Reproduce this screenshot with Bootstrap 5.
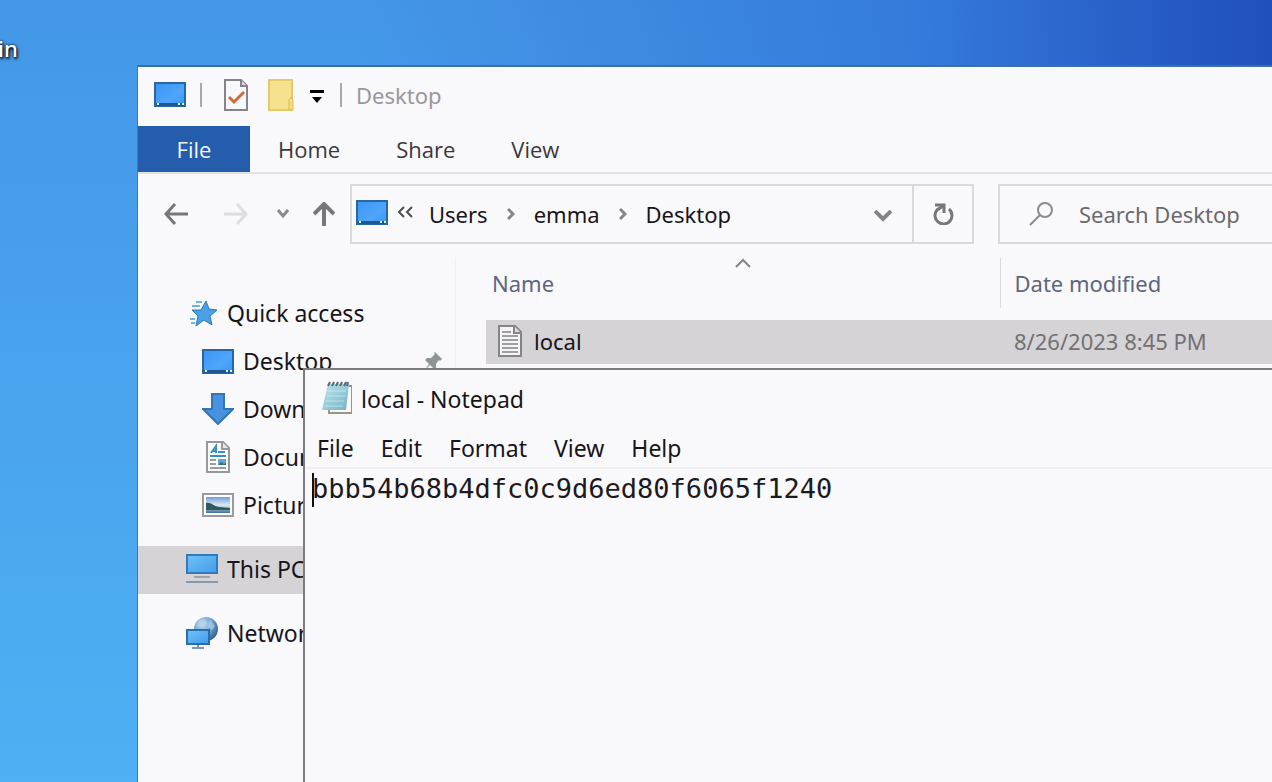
<!DOCTYPE html>
<html lang="en">
<head>
<meta charset="utf-8">
<meta name="viewport" content="width=device-width, initial-scale=1">
<title>Desktop</title>
<link href="https://cdn.jsdelivr.net/npm/bootstrap@5.3.0/dist/css/bootstrap.min.css" rel="stylesheet">
<style>
  body { font: 22px/32px "Noto Sans", "Open Sans", sans-serif; color: #17151a; }
  svg { display: block; flex: none; }
  button { font: inherit; color: inherit; border: 0; background: none; padding: 0; white-space: nowrap; }
  .desktop { background: linear-gradient(90deg, rgba(34,80,188,0) 28%, rgba(50,118,216,.85) 72%, #2457c2 94%, #2050bb), linear-gradient(#4497e8, #4fb0f3); }
  .desk-label { left: -2px; top: 32px; font-weight: 500; color: #fff; text-shadow: 1px 2px 3px #000, 0 0 3px #000; }
  .window { background: #f9f8fb; right: 0; bottom: 0; }
  .explorer { left: 137px; top: 65px; border-left: 1px solid #3b7ab5; border-top: 2px solid #3c719c; }
  .explorer-title { height: 59px; padding: 0 0 4px 16px; color: #99979b; }
  .rule { width: 2px; height: 24px; background: #a9a8ab; }
  .after-rule { margin-left: 22px; }
  .gap-icon { margin-left: 20px; }
  .gap-rule { margin-left: 14px; }
  .ribbon { height: 48px; border-bottom: 2px solid #e2e1e4; color: #39373c; font-family: "Open Sans", "Noto Sans", sans-serif; }
  .ribbon button { padding: 0 28px; }
  .ribbon .file-tab { width: 112px; padding: 0; background: #245dab; color: #f4f6fb; }
  .toolbar { padding: 10px 0 0 26px; }
  .gap-forward { margin-left: 36px; }
  .gap-recent { margin-left: 29px; }
  .gap-up { margin-left: 24px; }
  .field { height: 60px; border: 2px solid #d9d8db; }
  .address { margin-left: 15px; padding-left: 4px; }
  .crumb-arrow { margin: 0 19px; }
  .refresh { width: 60px; border-left: 2px solid #d9d8db; }
  .search { width: 274px; margin-left: 24px; border-right: 0; padding-left: 28px; }
  .search input { border: 0; outline: 0; background: none; padding: 0; margin-left: 25px; min-width: 0; color: #6b696e; }
  .search input::placeholder { color: #6b696e; opacity: 1; }
  .sidebar { width: 318px; margin-top: 14px; padding-top: 32px; border-right: 1px solid #f0eff2; font-size: 23px; }
  .sidebar a { height: 48px; color: inherit; text-decoration: none; padding: 0 12px 2px 48px; gap: 9px; }
  .sidebar a.sub { padding-left: 64px; }
  .sidebar a.chosen { background: #d5d3d5; }
  .sidebar .apart { margin-top: 16px; }
  .files { margin: 14px 0 0 30px; }
  .files table { width: 100%; table-layout: fixed; }
  .files th { height: 50px; font-weight: 400; color: #5c6680; padding: 0 0 0 6px; }
  .files td { height: 44px; padding: 0 0 2px; background: #d5d3d5; }
  .files .when { width: 272px; padding-left: 14px; }
  .files th.when { border-left: 1px solid #dcdbde; }
  .files td.when { color: #727074; }
  .files .spacing td { height: 12px; background: none; }
  .sort { left: 50%; top: 0; transform: translateX(-50%); }
  .notepad { left: 303px; top: 368px; border-left: 2px solid #7b7a7c; border-top: 2px solid #7b7a7c; font-size: 23px; }
  .notepad-title { height: 58px; padding-left: 17px; gap: 9px; }
  .notepad-title svg { margin-bottom: 3px; }
  .notepad-menu { height: 41px; padding: 0 0 0 12px; gap: 27px; border-bottom: 2px solid #efedf0; }
  .paper textarea { font: 27px/34px "DejaVu Sans Mono", monospace; color: #1c1a1e; border: 0; outline: 0; resize: none; background: none; padding: 3px 0 0 7px; }
  .caret { left: 7px; top: 4px; width: 2px; height: 34px; background: #111; }
</style>
</head>
<body>
<svg width="0" height="0" class="position-absolute" aria-hidden="true">
  <defs>
    <linearGradient id="screen" x1="0" y1="0" x2="1" y2="1"><stop offset="0" stop-color="#3995f4"/><stop offset=".6" stop-color="#4fa5fb"/><stop offset="1" stop-color="#3995f4"/></linearGradient>
    <linearGradient id="glass" x1="0" y1="0" x2="1" y2="1"><stop offset="0" stop-color="#6fc2fb"/><stop offset="1" stop-color="#449ce9"/></linearGradient>
    <linearGradient id="pad" x1="0" y1="0" x2="1" y2="1"><stop offset="0" stop-color="#bfe6ee"/><stop offset="1" stop-color="#72b3c4"/></linearGradient>
    <linearGradient id="photo" x1="0" y1="0" x2="0" y2="1"><stop offset="0" stop-color="#6f9dde"/><stop offset=".5" stop-color="#dcebf5"/><stop offset="1" stop-color="#3e7096"/></linearGradient>
    <radialGradient id="globe" cx=".35" cy=".3" r=".8"><stop offset="0" stop-color="#c6e0f2"/><stop offset=".5" stop-color="#6fa5cf"/><stop offset="1" stop-color="#28547f"/></radialGradient>
    <symbol id="desk" viewBox="0 0 32 25"><path d="M1 1h30v23H1z" fill="url(#screen)" stroke="#28679f" stroke-width="2"/><path d="M2 21h28v3H2z" fill="#1e5791"/><path d="M3 21h2v2H3zM24 21h2v2h-2zM28 21h2v2h-2z" fill="#e3f3ff"/></symbol>
  </defs>
</svg>

<main class="desktop position-relative vh-100 overflow-hidden">
  <div class="desk-label position-absolute">in</div>

  <section class="window explorer position-absolute overflow-hidden">
    <header class="explorer-title d-flex align-items-center">
      <svg width="32" height="25"><use href="#desk"/></svg>
      <span class="rule gap-rule"></span>
      <svg width="24" height="32" viewBox="0 0 24 32" class="after-rule"><path d="M1 1h16l6 6v24H1z" fill="#f8f7fa" stroke="#858488" stroke-width="2"/><path d="M17 1v6h6" fill="#dddce0" stroke="#858488" stroke-width="2"/><path d="m5 18 5 5 10-10" fill="none" stroke="#d2693d" stroke-width="3"/></svg>
      <svg width="26" height="32" viewBox="0 0 26 32" class="gap-icon"><path d="M1 1h23v30H1z" fill="#f6e18e" stroke="#e5cb68" stroke-width="2"/><path d="M21 31V21l2-3 2 3v10z" fill="#f3da7b" stroke="#d9bd57"/></svg>
      <button type="button" class="mx-3 pt-1" aria-label="Customize"><svg width="14" height="13" viewBox="0 0 14 13"><path d="M0 0h14v3H0zM2 7h10l-5 6z" fill="#000"/></svg></button>
      <span class="rule"></span>
      <span class="gap-rule">Desktop</span>
    </header>

    <nav class="ribbon d-flex align-items-stretch" aria-label="Ribbon">
      <button type="button" class="file-tab">File</button>
      <button type="button">Home</button>
      <button type="button">Share</button>
      <button type="button">View</button>
    </nav>

    <div class="toolbar d-flex align-items-center">
      <button type="button" aria-label="Back"><svg width="24" height="22" viewBox="0 0 24 22"><path d="M24 11H2M11 1 2 11l9 10" fill="none" stroke="#77767a" stroke-width="3"/></svg></button>
      <button type="button" aria-label="Forward" class="gap-forward"><svg width="24" height="22" viewBox="0 0 24 22"><path d="M0 11h22M13 1l9 10-9 10" fill="none" stroke="#dddce0" stroke-width="3"/></svg></button>
      <button type="button" aria-label="Recent" class="gap-recent"><svg width="12" height="12" viewBox="0 0 12 12"><path d="m1 2 5 6 5-6" fill="none" stroke="#8b8a8e" stroke-width="3"/></svg></button>
      <button type="button" aria-label="Up" class="gap-up"><svg width="22" height="24" viewBox="0 0 22 24"><path d="M11 24V2M1 12 11 2l10 10" fill="none" stroke="#77767a" stroke-width="4"/></svg></button>
      <div class="field address d-flex align-items-center flex-grow-1">
        <svg width="32" height="25" class="mb-1"><use href="#desk"/></svg>
        <svg width="17" height="12" viewBox="0 0 17 12" class="mx-2 mb-1"><path d="M8 1 3 6l5 5M16 1l-5 5 5 5" fill="none" stroke="#4c4b4f" stroke-width="2"/></svg>
        <button type="button" class="ms-2">Users</button>
        <svg width="8" height="12" viewBox="0 0 8 12" class="crumb-arrow"><path d="m1 1 5 5-5 5" fill="none" stroke="#858488" stroke-width="3"/></svg>
        <button type="button">emma</button>
        <svg width="8" height="12" viewBox="0 0 8 12" class="crumb-arrow"><path d="m1 1 5 5-5 5" fill="none" stroke="#858488" stroke-width="3"/></svg>
        <button type="button">Desktop</button>
        <button type="button" class="ms-auto pt-1" aria-label="Previous locations"><svg width="18" height="12" viewBox="0 0 18 12"><path d="m1 1 8 8 8-8" fill="none" stroke="#858488" stroke-width="4"/></svg></button>
        <button type="button" class="refresh gap-icon h-100 d-flex align-items-center justify-content-center" aria-label="Refresh"><svg width="21" height="22" viewBox="0 0 21 22"><path d="M16 6A8.500 8.500 0 1 1 4 7L10 3" fill="none" stroke="#77767a" stroke-width="3"/><path d="M2 2h9v8" fill="none" stroke="#77767a" stroke-width="3"/></svg></button>
      </div>
      <label class="field search d-flex align-items-center flex-shrink-0">
        <svg width="26" height="26" viewBox="0 0 26 26"><circle cx="17" cy="9" r="7" fill="none" stroke="#8b8a8e" stroke-width="2"/><path d="m12 14-10 10" stroke="#8b8a8e" stroke-width="2"/></svg>
        <input type="search" class="w-100" placeholder="Search Desktop" aria-label="Search Desktop">
      </label>
    </div>

    <div class="d-flex">
      <nav class="sidebar flex-shrink-0" aria-label="Folders">
        <a href="#" class="d-flex align-items-center"><svg width="32" height="28" viewBox="0 0 32 28"><path d="m20 2 3 8 8 1-7 6 2 9-8-5-8 6 2-10-6-6h9z" fill="#4a9fe8" stroke="#2e7ab5"/><path d="M10 3h6M6 7h8M4 20h5M5 24h4" stroke="#6eb5e2" stroke-width="2"/></svg>Quick access</a>
        <a href="#" class="sub d-flex align-items-center"><svg width="32" height="25"><use href="#desk"/></svg>Desktop
          <svg width="20" height="20" viewBox="0 0 20 20" class="ms-auto"><path d="m12 1 7 7-2 2-1-1-3 4v4l-2 1-4-4-6 6 5-7-4-4 2-2h4l4-4-1-1z" fill="#8f9496"/></svg></a>
        <a href="#" class="sub d-flex align-items-center"><svg width="32" height="32" viewBox="0 0 32 32"><path d="M10 1h12v15h9L16 31 1 16h9z" fill="#4792e0" stroke="#3573b2" stroke-width="2"/></svg>Downloads</a>
        <a href="#" class="sub d-flex align-items-center"><svg width="32" height="32" viewBox="0 0 32 32"><path d="M5 1h16l6 6v24H5z" fill="#fcfcfd" stroke="#98979a" stroke-width="2"/><path d="M20 1v7h7" fill="#e8e7ea" stroke="#98979a" stroke-width="2"/><path d="m9 12 5-7v7M11 10h4M16 11h7M8 15h16" fill="none" stroke="#3690c8" stroke-width="2"/><path d="M8 19h6M8 23h6M8 27h16" stroke="#9b9a9d" stroke-width="2"/><path d="M16 18h8v6h-8z" fill="#65a4d6"/><path d="m16 24 3-3 3 2 2-1v2z" fill="#397856"/></svg>Documents</a>
        <a href="#" class="sub d-flex align-items-center"><svg width="32" height="24" viewBox="0 0 32 24"><path d="M1 1h30v22H1z" fill="#fff" stroke="#9a999c" stroke-width="2"/><path d="M4 4h24v16H4z" fill="url(#photo)"/><path d="M4 10c5-1 7 3 13 4l11 1v2H4z" fill="#2f5a5c"/></svg>Pictures</a>
        <a href="#" class="chosen apart d-flex align-items-center"><svg width="32" height="30" viewBox="0 0 32 30"><path d="M1 1h30v18H1z" fill="url(#glass)" stroke="#307cb9" stroke-width="2"/><path d="M8 23h16" stroke="#98a4af" stroke-width="2"/><path d="M0 28h32" stroke="#8699ad" stroke-width="2"/></svg>This PC</a>
        <a href="#" class="apart d-flex align-items-center"><svg width="32" height="32" viewBox="0 0 32 32"><circle cx="20" cy="12" r="12" fill="url(#globe)"/><path d="m13 3 6-1 2 4-5 4-5-1zM24 3l5 6-3 4-4-4z" fill="#b5d3e8" opacity=".6"/><path d="M1 13h22v14H1z" fill="url(#glass)" stroke="#246fac" stroke-width="2"/><path d="M12 28v2M6 31h12" stroke="#7d99b0" stroke-width="2"/></svg>Network</a>
      </nav>

      <div class="files flex-grow-1">
        <table>
          <thead><tr>
            <th class="position-relative" scope="col">Name
              <svg class="sort position-absolute" width="16" height="10" viewBox="0 0 16 10"><path d="m1 9 7-7 7 7" fill="none" stroke="#858488" stroke-width="2"/></svg></th>
            <th class="when" scope="col">Date modified</th>
          </tr></thead>
          <tbody>
            <tr class="spacing"><td colspan="2"></td></tr>
            <tr>
              <td><div class="d-flex align-items-center ps-2"><svg width="32" height="32" viewBox="0 0 32 32" class="me-2"><path d="M5 1h16l6 6v24H5z" fill="#f4f3f5" stroke="#858488" stroke-width="2"/><path d="M20 1v7h7" fill="#dedde0" stroke="#858488" stroke-width="2"/><path d="M8 7h9M8 11h16M8 15h16M8 19h16M8 23h16M8 27h16" stroke="#a09fa2" stroke-width="2"/></svg>local</div></td>
              <td class="when">8/26/2023 8:45 PM</td>
            </tr>
          </tbody>
        </table>
      </div>
    </div>
  </section>

  <section class="window notepad position-absolute d-flex flex-column">
    <header class="notepad-title d-flex align-items-center flex-shrink-0">
      <svg width="30" height="33" viewBox="0 0 30 33"><path d="M8 5h22v27H7z" fill="#faf9f5" stroke="#9b9585" stroke-width="2"/><path d="M6 3h21l-3 26H0z" fill="url(#pad)"/><path d="M6 10h18M5 15h18M4 20h18M3 25h18" stroke="#d5edf2" opacity=".7"/><path d="m6 5 2-4m2 4 2-4m2 4 2-4m2 4 2-4m2 4 2-4m1 4 1-4" stroke="#5b6870" stroke-width="2"/></svg>
      <span>local - Notepad</span>
    </header>
    <nav class="notepad-menu d-flex align-items-center flex-shrink-0" aria-label="Menu">
      <button type="button">File</button>
      <button type="button">Edit</button>
      <button type="button">Format</button>
      <button type="button">View</button>
      <button type="button">Help</button>
    </nav>
    <div class="paper position-relative flex-grow-1">
      <textarea class="w-100 h-100 d-block" aria-label="Document text" spellcheck="false">bbb54b68b4dfc0c9d6ed80f6065f1240</textarea>
      <span class="caret position-absolute"></span>
    </div>
  </section>
</main>
<script src="https://cdn.jsdelivr.net/npm/bootstrap@5.3.0/dist/js/bootstrap.bundle.min.js"></script>
</body>
</html>
